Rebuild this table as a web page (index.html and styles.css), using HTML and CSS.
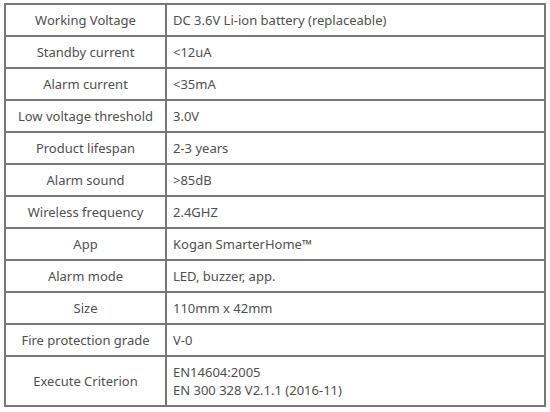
FILE: index.html
```html
<!DOCTYPE html>
<html>
<head>
<meta charset="utf-8">
<link rel="stylesheet" href="styles.css">
</head>
<body>
<table class="spec">
<tr><td class="k">Working Voltage</td><td class="v">DC 3.6V Li-ion battery (replaceable)</td></tr>
<tr><td class="k">Standby current</td><td class="v">&lt;12uA</td></tr>
<tr><td class="k">Alarm current</td><td class="v">&lt;35mA</td></tr>
<tr><td class="k">Low voltage threshold</td><td class="v">3.0V</td></tr>
<tr><td class="k">Product lifespan</td><td class="v">2-3 years</td></tr>
<tr><td class="k">Alarm sound</td><td class="v">&gt;85dB</td></tr>
<tr><td class="k">Wireless frequency</td><td class="v">2.4GHZ</td></tr>
<tr><td class="k">App</td><td class="v">Kogan SmarterHome™</td></tr>
<tr><td class="k">Alarm mode</td><td class="v">LED, buzzer, app.</td></tr>
<tr><td class="k">Size</td><td class="v">110mm x 42mm</td></tr>
<tr><td class="k">Fire protection grade</td><td class="v">V-0</td></tr>
<tr class="tall"><td class="k">Execute Criterion</td><td class="v">EN14604:2005<br>EN 300 328 V2.1.1 (2016-11)</td></tr>
</table>
</body>
</html>
```
FILE: styles.css
```css
html, body {
  margin: 0;
  background: #fff;
}
body {
  padding: 3px 0 0 4px;
  font-family: "Noto Sans", sans-serif;
  font-size: 13px;
  color: #4f4f4f;
}
.spec {
  border-collapse: collapse;
  width: 542px;
  table-layout: fixed;
}
.spec td {
  border: 2px solid #777;
  height: 32px;
  padding: 0 6px;
  line-height: 18px;
  box-sizing: border-box;
}
.spec td.k {
  width: 161px;
  text-align: center;
}
.spec .tall td {
  height: 50px;
}
```
